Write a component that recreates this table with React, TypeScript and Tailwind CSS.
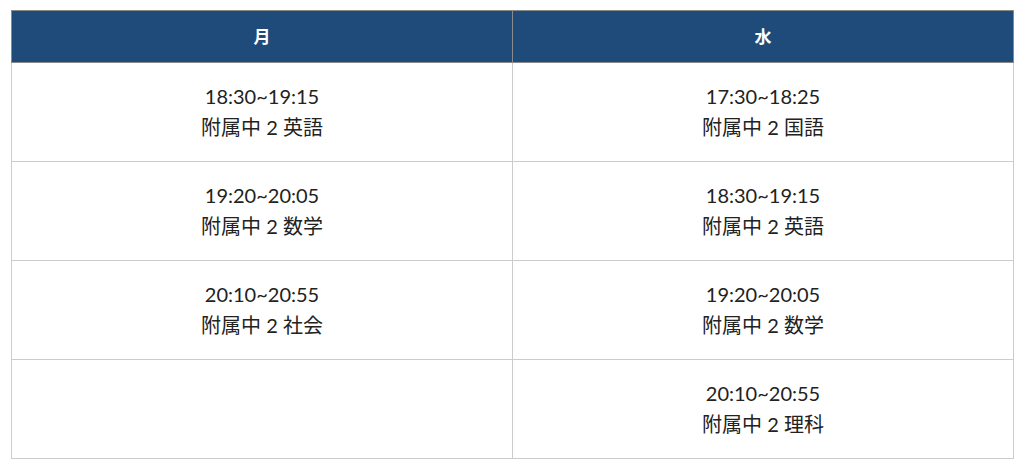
export default function App() {
  const rows: [string[] | null, string[] | null][] = [
    [["18:30~19:15", "附属中２英語"], ["17:30~18:25", "附属中２国語"]],
    [["19:20~20:05", "附属中２数学"], ["18:30~19:15", "附属中２英語"]],
    [["20:10~20:55", "附属中２社会"], ["19:20~20:05", "附属中２数学"]],
    [null, ["20:10~20:55", "附属中２理科"]],
  ];
  const cell = (c: string[] | null) => (
    <td className="border border-[#cccccc] h-[99px] text-center align-middle text-[20px] leading-[31px] text-[#222]">
      {c && (
        <>
          <div>{c[0]}</div>
          <div>{c[1].replace("２", " 2 ")}</div>
        </>
      )}
    </td>
  );
  return (
    <div className="w-[1024px] h-[472px] bg-white pt-[10px] pl-[11px] pr-[10px]" style={{ fontFamily: 'Lato, "Noto Sans CJK JP", sans-serif' }}>
      <table className="w-full border-collapse table-fixed">
        <thead>
          <tr>
            <th className="h-[52px] bg-[#1f4b7a] text-white font-bold text-[17px] border border-[#8a8a8a]">月</th>
            <th className="h-[52px] bg-[#1f4b7a] text-white font-bold text-[17px] border border-[#8a8a8a]">水</th>
          </tr>
        </thead>
        <tbody>
          {rows.map((r, i) => (
            <tr key={i}>
              {cell(r[0])}
              {cell(r[1])}
            </tr>
          ))}
        </tbody>
      </table>
    </div>
  );
}
